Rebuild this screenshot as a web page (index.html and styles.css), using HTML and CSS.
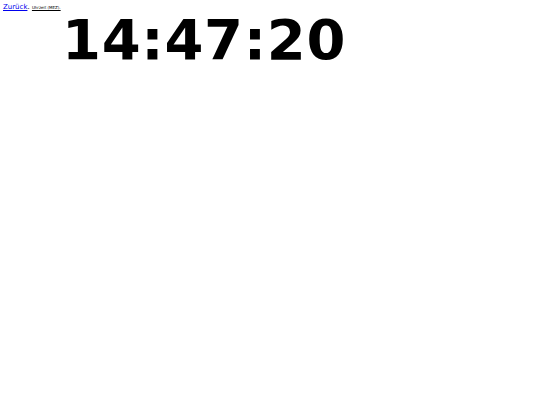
FILE: index.html
```html
<!DOCTYPE html>
<html>
<head>
<meta charset="utf-8">
<link rel="stylesheet" href="styles.css">
</head>
<body>
<div class="top"><a class="back" href="#">Zurück</a>. <a class="note" href="#">Uhrzeit (MEZ).</a></div>
<div class="clock">14:47:20</div>
</body>
</html>
```
FILE: styles.css
```css
html, body { margin: 0; padding: 0; background: #fff; }
body { font-family: "DejaVu Sans", Verdana, sans-serif; color: #000; }
.top { padding: 3px 0 0 3px; font-size: 7px; line-height: 9px; }
.back { color: #0000ee; }
.note { color: #000; font-size: 4px; }
.clock { font-weight: bold; font-size: 56px; line-height: 56px; letter-spacing: 0.7px; padding-left: 62px; }
```
